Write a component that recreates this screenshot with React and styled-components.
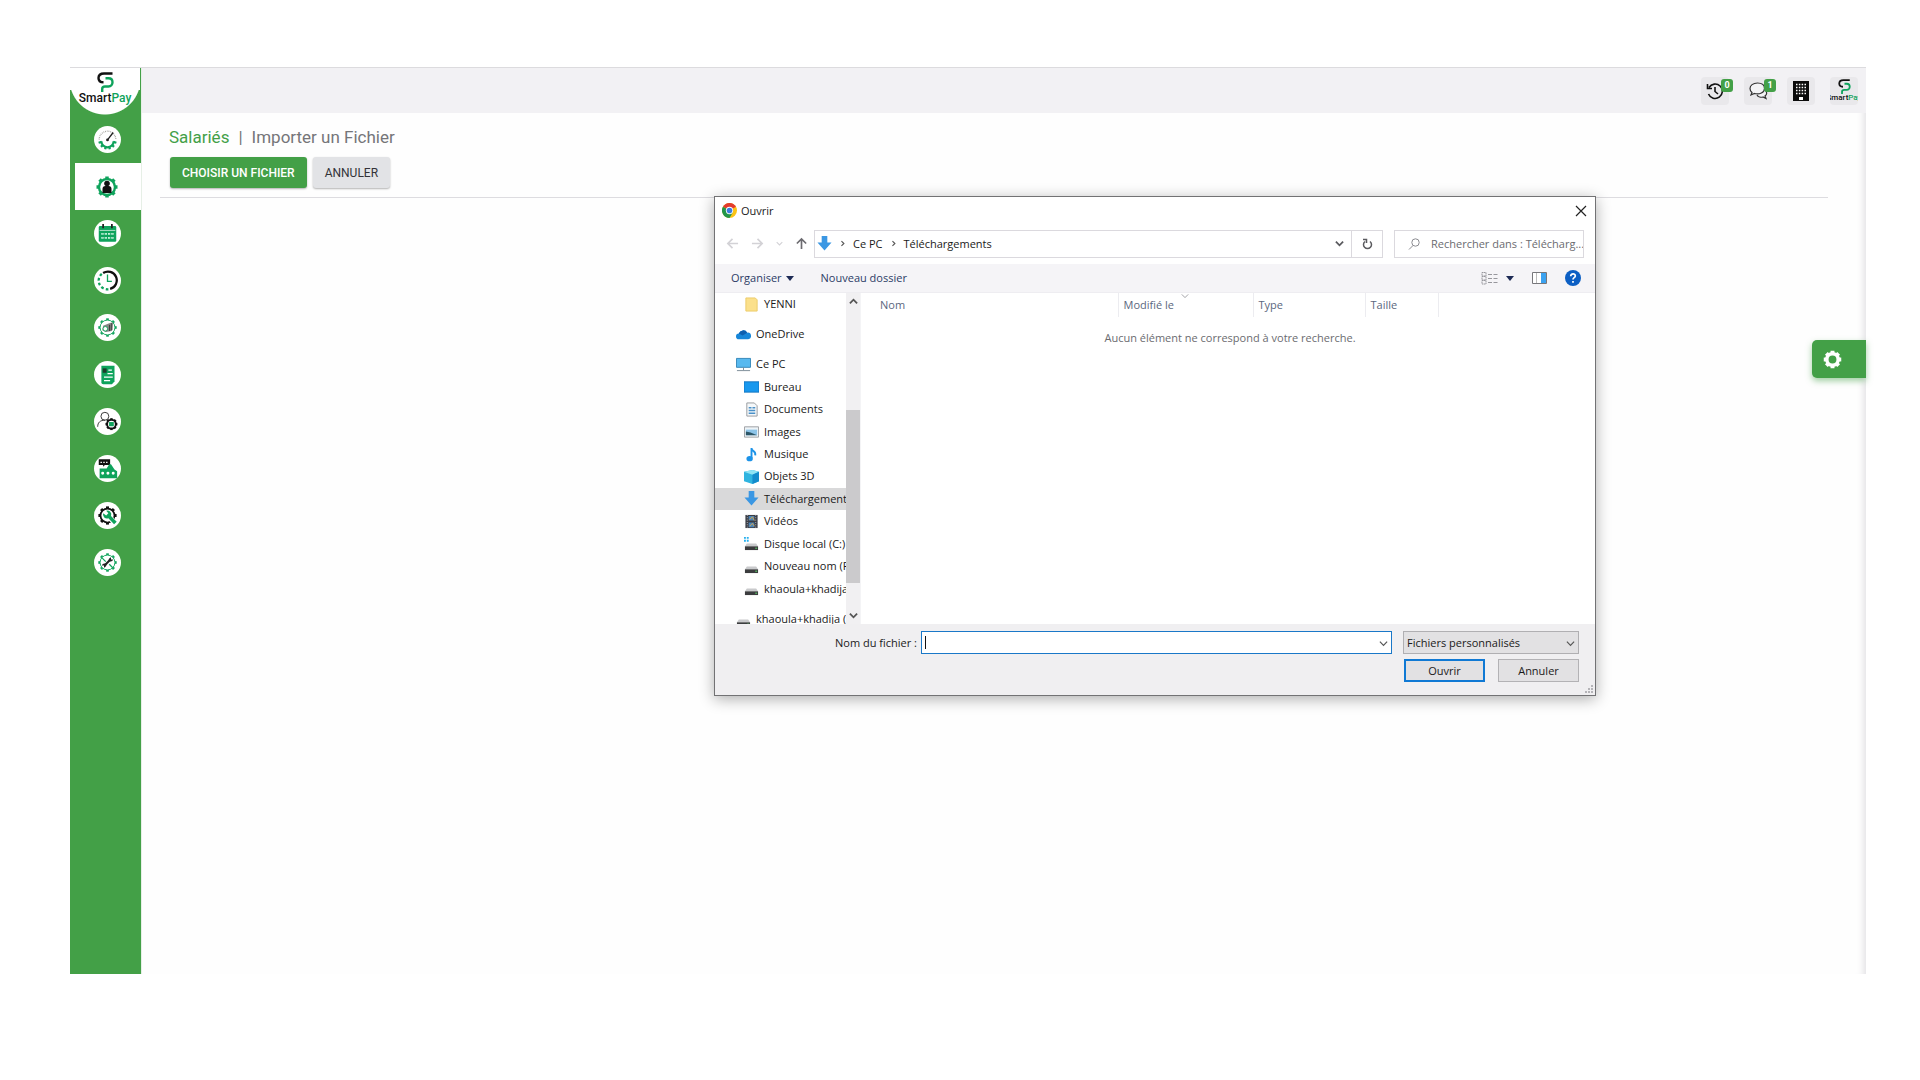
import React from "react";
import styled, { createGlobalStyle, css } from "styled-components";

const GREEN = "#43a047";
const MARK = "#0fa35c";
const UI = '"Open Sans", "Noto Sans", sans-serif';

const GlobalStyle = createGlobalStyle`
  *, *::before, *::after { box-sizing: border-box; }
  body { margin: 0; background: #fff; font-family: Roboto, sans-serif; }
  button, input, select { font: inherit; color: inherit; margin: 0; }
  svg { display: block; flex: none; }
`;

/* ---------- page shell ---------- */

const Page = styled.div`
  min-height: 100vh;
  padding: 67px 54px 106px 70px;
  display: flex;
`;

const Frame = styled.div`
  flex: 1;
  display: flex;
  position: relative;
  background: #fefefe;
  border-top: 1px solid #dcdbde;
`;

const Sidebar = styled.nav`
  flex: none;
  width: 71px;
  background: ${GREEN};
`;

const Brand = styled.a`
  display: flex;
  flex-direction: column;
  align-items: center;
  height: 48px;
  margin: 0 1px 0 0;
  background: radial-gradient(circle at 50% 11px, #fff 35px, ${GREEN} 36px);
  text-decoration: none;
`;

const BrandTop = styled.div`
  width: 100%;
  height: 22px;
  padding-top: 4px;
  display: flex;
  justify-content: center;
  background: #fff;
`;

const BrandName = styled.span`
  font-size: ${(p) => (p.$small ? 8 : 12)}px;
  line-height: ${(p) => (p.$small ? 8 : 16)}px;
  font-weight: 500;
  color: #111;
  white-space: nowrap;
  em { font-style: normal; color: ${MARK}; }
`;

const Menu = styled.ul`
  list-style: none;
  margin: 0;
  padding: 0;
`;

const MenuLink = styled.a`
  display: flex;
  align-items: center;
  justify-content: center;
  height: 47px;
  padding-right: 1px;
  border-left: 5px solid ${GREEN};
  background: ${(p) => (p.$active ? "#fff" : "transparent")};
`;

const Disc = styled.span`
  display: grid;
  place-items: center;
  width: 27px;
  height: 27px;
  margin-right: 1px;
  border-radius: 50%;
  background: #fff;
`;

const Main = styled.main`
  flex: 1;
  min-width: 0;
  border-left: 1px solid #e6efe6;
  box-shadow: inset -9px 0 8px -8px #d9d8dc;
`;

const TopBar = styled.header`
  display: flex;
  justify-content: flex-end;
  align-items: center;
  gap: 15px;
  height: 45px;
  padding-right: 8px;
  background: #f2f1f4;
`;

const TopButton = styled.button`
  position: relative;
  display: flex;
  flex-direction: column;
  align-items: center;
  justify-content: center;
  width: 28px;
  height: 28px;
  padding: 0;
  border: 0;
  border-radius: 4px;
  background: #e9e8eb;
  overflow: ${(p) => (p.$clip ? "hidden" : "visible")};
`;

const Badge = styled.span`
  position: absolute;
  top: 2px;
  right: -4px;
  width: 12px;
  height: 13px;
  border-radius: 3px;
  background: ${GREEN};
  color: #fff;
  font-size: 9px;
  font-weight: 700;
  line-height: 13px;
  text-align: center;
`;

const PageHead = styled.section`
  margin: 0 38px 0 18px;
  padding: 12px 0 9px 9px;
  border-bottom: 1px solid #dddce0;
`;

const Title = styled.h1`
  display: flex;
  gap: 9px;
  margin: 0 0 8px;
  font-size: 17px;
  line-height: 24px;
  font-weight: 400;
  color: #757579;
  a { color: ${GREEN}; text-decoration: none; }
`;

const Actions = styled.div`
  display: flex;
  gap: 6px;
  padding-left: 1px;
`;

const ActionButton = styled.button`
  height: 31px;
  padding: 0 12px;
  border: 0;
  border-radius: 3px;
  font-size: 12px;
  font-weight: ${(p) => (p.$primary ? 500 : 400)};
  color: ${(p) => (p.$primary ? "#fff" : "#333338")};
  background: ${(p) => (p.$primary ? GREEN : "#e2e3e6")};
  box-shadow: 0 1px 2px rgba(0, 0, 0, 0.3);
`;

const SettingsTab = styled.button`
  position: absolute;
  right: 0;
  top: 272px;
  display: flex;
  align-items: center;
  width: 54px;
  height: 38px;
  padding: 0 0 0 10px;
  border: 0;
  border-radius: 5px 0 0 5px;
  background: ${GREEN};
  box-shadow: 0 3px 6px rgba(67, 160, 71, 0.5);
`;

/* ---------- file dialog ---------- */

const Dialog = styled.section`
  position: absolute;
  left: 644px;
  top: 128px;
  width: 882px;
  border: 1px solid #727274;
  background: #fff;
  box-shadow: 0 3px 14px rgba(0, 0, 0, 0.32);
  font-family: ${UI};
  font-size: 11px;
  line-height: 16px;
  color: #1a1a1a;
`;

const TitleBar = styled.header`
  display: flex;
  align-items: center;
  gap: 4px;
  height: 27px;
  padding: 0 8px 0 7px;
  h2 { flex: 1; margin: 0; font: inherit; }
`;

const IconButton = styled.button`
  display: grid;
  place-items: center;
  padding: 0;
  border: 0;
  background: none;
`;

const NavRow = styled.div`
  display: flex;
  align-items: center;
  height: 40px;
  padding: 0 11px 1px;
`;

const NavButtons = styled.div`
  display: flex;
  align-items: center;
  gap: 12px;
  width: 88px;
`;

const Address = styled.div`
  flex: 1;
  display: flex;
  align-items: center;
  gap: 7px;
  height: 28px;
  padding-left: 2px;
  border: 1px solid #dbd9de;
  ${IconButton}:nth-last-child(2) { margin-left: auto; }
  ${IconButton}:last-child {
    width: 31px;
    height: 26px;
    border-left: 1px solid #dbd9de;
  }
`;

const Crumb = styled.a`
  color: inherit;
  text-decoration: none;
`;

const Search = styled.label`
  display: flex;
  align-items: center;
  gap: 11px;
  width: 190px;
  height: 28px;
  margin-left: 11px;
  padding: 0 0 0 13px;
  border: 1px solid #dbd9de;
  input {
    flex: 1;
    min-width: 0;
    padding: 0;
    border: 0;
    outline: 0;
    background: none;
  }
  input::placeholder { color: #6b6b70; opacity: 1; }
`;

const ToolBar = styled.div`
  display: flex;
  align-items: center;
  height: 29px;
  padding: 0 14px 0 16px;
  background: #f5f4f7;
  border-bottom: 1px solid #eeedf1;
  color: #2c3c66;
`;

const TextButton = styled.button`
  display: flex;
  align-items: center;
  gap: 4px;
  margin-right: 27px;
  padding: 0;
  border: 0;
  background: none;
`;

const ToolIcons = styled.div`
  display: flex;
  align-items: center;
  gap: 18px;
  margin-left: auto;
`;

const ViewButton = styled(IconButton)`
  display: flex;
  gap: 8px;
  align-items: center;
`;

const Body = styled.div`
  display: flex;
  height: 331px;
`;

const Tree = styled.div`
  flex: none;
  width: 131px;
  overflow: hidden;
  display: flex;
  flex-direction: column;
  gap: 8px;
`;

const TreeGroup = styled.ul`
  flex: none;
  display: grid;
  grid-auto-rows: 1fr;
  height: ${(p) => p.$height}px;
  margin: 0;
  padding: 0;
  list-style: none;
`;

const TreeItem = styled.li`
  display: flex;
  align-items: center;
  gap: 5px;
  padding-left: ${(p) => (p.$nested ? 29 : 21)}px;
  white-space: nowrap;
  background: ${(p) => (p.$selected ? "#d9d9da" : "transparent")};
`;

const ScrollBar = styled.div`
  flex: none;
  display: flex;
  flex-direction: column;
  align-items: center;
  width: 15px;
  padding: 4px 0;
  background: #f1f0f2;
  border-right: 1px solid #f4f4f6;
`;

const Thumb = styled.div`
  width: 100%;
  height: 173px;
  margin: auto 0 28px;
  background: #cbcacc;
`;

const Files = styled.div`
  flex: 1;
  position: relative;
`;

const Table = styled.table`
  width: 578px;
  table-layout: fixed;
  border-collapse: collapse;
  th {
    height: 24px;
    padding: 0 0 0 5px;
    border-right: 1px solid #ececf0;
    font-weight: 400;
    text-align: left;
    color: #5b6780;
  }
  th:first-child { padding-left: 19px; }
`;

const Empty = styled.p`
  margin: 13px 0 0;
  padding-left: 4px;
  text-align: center;
  color: #6b6b70;
`;

const SortMark = styled.span`
  position: absolute;
  left: 320px;
  top: -1px;
`;

const Footer = styled.form`
  display: grid;
  grid-template-columns: 200px 1fr 176px;
  column-gap: 11px;
  row-gap: 5px;
  padding: 7px 16px 13px 6px;
  background: #f0eff1;
`;

const NameField = styled.div`
  grid-column: 1 / 3;
  display: flex;
  align-items: center;
  gap: 4px;
  padding-left: 114px;
`;

const Combo = styled.div`
  position: relative;
  flex: 1;
  svg {
    position: absolute;
    right: 4px;
    top: 8px;
    pointer-events: none;
  }
`;

const control = css`
  width: 100%;
  height: 23px;
  border-radius: 0;
  outline: 0;
  appearance: none;
`;

const NameInput = styled.input`
  ${control}
  display: block;
  padding: 0 4px;
  border: 1px solid #1a78c8;
  background: #fff;
`;

const Caret = styled.span`
  position: absolute;
  left: 4px;
  top: 5px;
  width: 1px;
  height: 13px;
  background: #111;
`;

const TypeSelect = styled.select`
  ${control}
  display: block;
  padding: 0 3px;
  border: 1px solid #b0afb2;
  background: #e2e1e3;
`;

const FooterButtons = styled.div`
  grid-column: 3;
  display: flex;
  justify-content: space-between;
  padding-left: 1px;
`;

const DialogButton = styled.button`
  width: 81px;
  height: 23px;
  padding: 0;
  border: ${(p) => (p.$default ? "2px solid #1079d4" : "1px solid #b3b2b5")};
  background: #e2e1e3;
`;

const Grip = styled.span`
  position: absolute;
  right: 2px;
  bottom: 2px;
`;

/* ---------- drawings ---------- */

const Gear = ({ cx = 12, cy = 12, r = 7, color = MARK, w = 2, n = 8, tooth = 3 }) => (
  <g stroke={color} fill="none">
    <circle cx={cx} cy={cy} r={r} strokeWidth={w} />
    {Array.from({ length: n }, (_, i) => (
      <line
        key={i}
        x1={cx}
        x2={cx}
        y1={cy - r}
        y2={cy - r - tooth}
        strokeWidth={tooth + 1}
        transform={`rotate(${(i * 360) / n} ${cx} ${cy})`}
      />
    ))}
  </g>
);

const Icon = ({ size = 24, box = 24, children }) => (
  <svg width={size} height={size} viewBox={`0 0 ${box} ${box}`} aria-hidden="true">
    {children}
  </svg>
);

const Mark = ({ width = 17, height = 20 }) => (
  <svg width={width} height={height} viewBox="0 0 17 20" fill="none" strokeWidth="2.4" aria-hidden="true">
    <path d="M15.500 1.500H7C3.500 1.500 1.500 3.300 1.500 6S3.500 10.300 6.500 10.300" stroke="#111" />
    <path d="M8.500 6.300h3c2.500 0 4 1.700 4 4s-1.500 4.200-4 4.200H8c-1.800 0-2.800 1-2.800 2.500V20" stroke={MARK} />
  </svg>
);

const MENU = [
  ["Tableau de bord", (
    <>
      <path d="M2.500 12a9.500 9.500 0 0 1 19 0" fill="none" stroke="#a5a5a0" strokeWidth="1.500" strokeDasharray="1 1" />
      <path d="M5 14a7 7 0 0 0 14 0" fill="none" stroke={MARK} strokeWidth="2.500" />
      {[-75, -45, -15, 15, 45, 75].map((a) => (
        <path key={a} d="M12 20v3.500" stroke={MARK} strokeWidth="2.600" transform={`rotate(${a} 12 13)`} />
      ))}
      <path d="M12 12.500L18.500 4" stroke="#222" strokeWidth="1.500" />
      <circle cx="12" cy="12.500" r="1.600" fill="#222" />
    </>
  )],
  ["Salariés", (
    <>
      <Gear r={8} w={2.4} tooth={2.500} />
      <circle cx="12" cy="8.500" r="2.800" fill="#111" />
      <path d="M7.500 18v-4q0-3 3-3h3q3 0 3 3v4z" fill="#111" />
    </>
  )],
  ["Calendrier", (
    <>
      <rect x="2" y="3.500" width="20" height="18" rx="1.500" fill={MARK} />
      <path d="M7 1v5M17 1v5" stroke="#222" strokeWidth="2" />
      <path d="M3 8.500h18" stroke="#bfe6d0" />
      <path d="M5 12.500h14M5 17h14" stroke="#e8fff2" strokeWidth="2" strokeDasharray="2.500 1.300" />
      <path d="M5.800 12.500h13M5.800 17h13" stroke={MARK} strokeWidth=".8" strokeDasharray="1 2.800" />
    </>
  )],
  ["Pointage", (
    <g fill="none">
      <path d="M7 3.500A10 10 0 1 1 15 21.500" stroke="#111" strokeWidth="2.600" />
      <path d="M13 22A10 10 0 0 1 6 4" stroke={MARK} strokeWidth="2.600" strokeDasharray="3 2.500" />
      <path d="M12 5v8h5" stroke={MARK} strokeWidth="1.500" />
    </g>
  )],
  ["Paie", (
    <>
      <Gear r={8.5} w={1.1} tooth={2} />
      <path d="M7 10l7-3 4-1-1 10-7 1-4-2z" fill="#858585" />
      <path d="M14.500 9v7M17 7v8" stroke="#222" />
      <circle cx="9.500" cy="13.500" r="2.600" fill="#fff" stroke={MARK} />
    </>
  )],
  ["Documents", (
    <>
      <path d="M5 2h15v18l-3 3H7q-2 0-2-2z" fill={MARK} />
      <path d="M6.500 5H11v5H6.500z" fill="#1d3b2c" />
      <path d="M13 7h4M12 11h6M8 15h10M8 19h7" stroke="#fff" strokeWidth="1.600" />
    </>
  )],
  ["Gestion du personnel", (
    <>
      <circle cx="9" cy="6" r="4.500" fill="none" stroke="#222" />
      <path d="M.8 18c0-5 3-7.500 8.200-7.500" fill="none" stroke="#222" />
      <Gear cx={16.5} cy={15} r={5} w={2.2} tooth={1.8} color="#111" />
      <rect x="13.800" y="12.600" width="5.400" height="4.800" fill={MARK} />
    </>
  )],
  ["Messagerie", (
    <>
      <path d="M2 1.500h13v6.500H9l-2 2V8H2z" fill="#111" />
      <path d="M4 5h9" stroke="#fff" strokeWidth="1.600" strokeDasharray="1.600 1.600" />
      <path d="M3 12h8l3-5h2l4 6 3 2v8H3z" fill={MARK} />
      <path d="M6.500 17.500h.01M12.500 17.500h.01M18.500 17.500h.01" stroke="#fff" strokeWidth="3.400" strokeLinecap="round" />
    </>
  )],
  ["Maintenance", (
    <>
      <Gear r={8} w={2} tooth={2.400} color="#111" />
      <path d="M12.500 12.500l8 8" stroke="#fff" strokeWidth="6" />
      <path d="M7 9.500a4.500 4.500 0 0 0 6 5.500l6.500 7 3-3-6.500-6.500A4.500 4.500 0 0 0 10.500 6.500l2.500 3-2.500 2.500z" fill={MARK} />
    </>
  )],
  ["Paramétrage", (
    <>
      <Gear r={8.5} w={1.1} tooth={2} />
      <path d="M6 7l4 4M14 14l4 4" stroke={MARK} strokeWidth="1.500" />
      <path d="M9.500 14.500l5-5" stroke="#222" strokeWidth="2.400" />
      <path d="M13.500 10.500q-1-3 2.500-4.500v2.500h2.500q-1 3.500-5 2zM10.500 13.500q1 3-2.500 4.500v-2.500H5.500q1-3.500 5-2z" fill="#222" />
    </>
  )],
];

const Chevron = ({ dir = "down", size = 9, color = "#555", w = 1.6 }) => (
  <svg width={size} height={size} viewBox="0 0 10 10" fill="none" stroke={color} strokeWidth={w} aria-hidden="true">
    <path d={{ down: "M1 3l4 4 4-4", up: "M1 7l4-4 4 4", right: "M3.500 1.500L7 5 3.500 8.500" }[dir]} />
  </svg>
);

const Arrow = ({ turn = 0, color }) => (
  <svg width="13" height="13" viewBox="0 0 14 14" fill="none" stroke={color} strokeWidth="1.800" aria-hidden="true">
    <path d="M13 7H2M7 2L2 7l5 5" transform={`rotate(${turn} 7 7)`} />
  </svg>
);

const Caption = ({ color = "#1d2a55" }) => (
  <svg width="8" height="5" viewBox="0 0 8 5" aria-hidden="true"><path d="M0 0h8L4 5z" fill={color} /></svg>
);

const DownArrow = () => <path d="M5 0h6v7h4.500L8 15.500.5 7H5z" fill="#3b97e3" />;

const Drive = () => (
  <>
    <path d="M3 7h10l2 3H1z" fill="#c9cacc" />
    <path d="M1 10h14v4H1z" fill="#3b3c3e" />
    <path d="M12 12h2" stroke="#5fe06b" />
  </>
);

const TREE_ICONS = {
  folder: <path d="M2 1h10l2 2v12H2z" fill="#fbe08b" stroke="#eccb68" />,
  cloud: (
    <>
      <path d="M3 13a3 3 0 0 1 0-6 5 5 0 0 1 9-1 3.500 3.500 0 0 1 1 7z" fill="#1686d9" />
      <path d="M3 7a5 5 0 0 1 9-1l-5 3z" fill="#0c5fb0" />
    </>
  ),
  pc: (
    <>
      <path d="M.5 1.500h15v9.500H.5z" fill="#58b9ef" stroke="#3486b8" />
      <path d="M8 11v3M1 14.500h14" stroke="#7a8b96" />
    </>
  ),
  desktop: <path d="M0 3h16v11H0z" fill="#1898ee" stroke="#1274bf" />,
  document: (
    <>
      <path d="M3 1h8l3 3v11H3z" fill="#f5f8fa" stroke="#95999d" />
      <path d="M5 6h3M9 6h3M5 9h7M5 12h7" stroke="#4a90c8" strokeWidth="1.600" />
    </>
  ),
  image: (
    <>
      <path d="M.5 3h15v11H.5z" fill="#eef4f8" stroke="#9b9ea1" />
      <path d="M2 6h12v6H2z" fill="#8cc4e8" />
      <path d="M2 12V8l5 1 7 3z" fill="#2c5668" />
    </>
  ),
  music: (
    <>
      <path d="M8 12V1c0 4 5 3 4 8" fill="none" stroke="#1c93e8" strokeWidth="2" />
      <ellipse cx="6" cy="12.500" rx="3.400" ry="2.800" fill="#1c93e8" />
    </>
  ),
  cube: (
    <>
      <path d="M0 3l9-2 7 2v10l-7 3-9-3z" fill="#2fb4e0" />
      <path d="M0 3l9-2 7 2-7 3z" fill="#8fe4f4" />
      <path d="M9 6l7-3v10l-7 3z" fill="#148ccc" />
    </>
  ),
  download: <DownArrow />,
  video: (
    <>
      <path d="M1.500 1h13v14h-13z" fill="#3a3d46" />
      <path d="M5 2h6v5H5zM5 9h6v5H5z" fill="#4b83b8" />
      <path d="M6 6l3-3 2 4M6 13l3-3 2 3" stroke="#d9a648" fill="none" />
      <path d="M3.500 1v14M12.500 1v14" stroke="#bbb" strokeDasharray="1 1.500" />
    </>
  ),
  system: (
    <>
      <g transform="translate(0 1)"><Drive /></g>
      <path d="M0 1h2v2H0zM3 1h2v2H3zM0 4h2v2H0zM3 4h2v2H3z" fill="#27b0ee" />
    </>
  ),
  drive: <g transform="translate(0 1)"><Drive /></g>,
};

const PC_ITEMS = [
  ["pc", "Ce PC"],
  ["desktop", "Bureau"],
  ["document", "Documents"],
  ["image", "Images"],
  ["music", "Musique"],
  ["cube", "Objets 3D"],
  ["download", "Téléchargements"],
  ["video", "Vidéos"],
  ["system", "Disque local (C:)"],
  ["drive", "Nouveau nom (F:)"],
  ["drive", "khaoula+khadija"],
];

const TreeRow = ({ icon, label, nested, selected }) => (
  <TreeItem $nested={nested} $selected={selected}>
    <Icon size={15} box={16}>{TREE_ICONS[icon]}</Icon>
    {label}
  </TreeItem>
);

const Chrome = () => (
  <Icon size={15} box={16}>
    <circle cx="8" cy="8" r="8" fill="#fbc316" />
    <path d="M8 8L1.070 4A8 8 0 0 1 14.930 4z" fill="#e33b2e" />
    <path d="M8 8L1.070 4A8 8 0 0 0 8 16l3.500-6z" fill="#23964a" />
    <circle cx="8" cy="8" r="3.900" fill="#fff" />
    <circle cx="8" cy="8" r="3" fill="#3b7de0" />
  </Icon>
);

function FileDialog() {
  return (
    <Dialog role="dialog" aria-labelledby="dialog-title">
      <TitleBar>
        <Chrome />
        <h2 id="dialog-title">Ouvrir</h2>
        <IconButton aria-label="Fermer">
          <svg width="12" height="12" viewBox="0 0 12 12" stroke="#222" strokeWidth="1.200">
            <path d="M1 1l10 10M11 1L1 11" />
          </svg>
        </IconButton>
      </TitleBar>

      <NavRow>
        <NavButtons>
          <IconButton aria-label="Précédent"><Arrow color="#d3d2d6" /></IconButton>
          <IconButton aria-label="Suivant"><Arrow turn={180} color="#d3d2d6" /></IconButton>
          <IconButton aria-label="Récents"><Chevron size={7} color="#d3d2d6" /></IconButton>
          <IconButton aria-label="Dossier parent"><Arrow turn={90} color="#6c6b70" /></IconButton>
        </NavButtons>
        <Address>
          <Icon size={15} box={16}><DownArrow /></Icon>
          <Chevron dir="right" size={7} />
          <Crumb href="#pc">Ce PC</Crumb>
          <Chevron dir="right" size={7} />
          <Crumb href="#telechargements">Téléchargements</Crumb>
          <IconButton aria-label="Historique"><Chevron color="#5a5a5e" w={2} /></IconButton>
          <IconButton aria-label="Actualiser">
            <svg width="11" height="12" viewBox="0 0 11 12" fill="none" stroke="#5a5a5e" strokeWidth="1.500">
              <path d="M3 3.500A4 4 0 1 0 8 3.500M1 1.500h3.500V5" />
            </svg>
          </IconButton>
        </Address>
        <Search>
          <svg width="12" height="12" viewBox="0 0 12 12" fill="none" stroke="#8b8b90">
            <circle cx="7.500" cy="4.500" r="3.700" />
            <path d="M5 7.500L1 11.500" />
          </svg>
          <input type="text" aria-label="Rechercher" placeholder="Rechercher dans : Télécharg..." />
        </Search>
      </NavRow>

      <ToolBar>
        <TextButton>Organiser <Caption /></TextButton>
        <TextButton>Nouveau dossier</TextButton>
        <ToolIcons>
          <ViewButton aria-label="Affichage">
            <svg width="17" height="13" viewBox="0 0 17 13" fill="none" stroke="#97979c">
              <path d="M1 .5h4v3.500H1zM1 4.500h4v3.500H1zM1 8.500h4v3.500H1z" strokeDasharray="1.500 .5" />
              <path d="M7 2.500h4M12.500 2.500h4M7 6.500h4M12.500 6.500h4M7 10.500h4M12.500 10.500h4" />
            </svg>
            <Caption />
          </ViewButton>
          <IconButton aria-label="Volet de visualisation">
            <svg width="15" height="12" viewBox="0 0 15 12">
              <path d="M.5 .5h14v11H.5z" fill="#fff" stroke="#77777b" />
              <path d="M9 1h5v10H9z" fill="#3ba2f0" />
              <path d="M4.500 1v10" stroke="#bbb" />
            </svg>
          </IconButton>
          <IconButton aria-label="Aide">
            <svg width="16" height="16" viewBox="0 0 16 16">
              <circle cx="8" cy="8" r="8" fill="#0c5fc4" />
              <path d="M5.700 6.200C5.700 3 10.500 3.200 10.300 6 10.200 7.700 8 7.600 8 9.500M8 11v1.800" fill="none" stroke="#fff" strokeWidth="1.700" />
            </svg>
          </IconButton>
        </ToolIcons>
      </ToolBar>

      <Body>
        <Tree>
          <TreeGroup $height={22}><TreeRow icon="folder" label="YENNI" nested /></TreeGroup>
          <TreeGroup $height={22}><TreeRow icon="cloud" label="OneDrive" /></TreeGroup>
          <TreeGroup $height={247}>
            {PC_ITEMS.map(([icon, label], i) => (
              <TreeRow key={label} icon={icon} label={label} nested={i > 0} selected={icon === "download"} />
            ))}
          </TreeGroup>
          <TreeGroup $height={22}><TreeRow icon="drive" label="khaoula+khadija (F:)" /></TreeGroup>
        </Tree>
        <ScrollBar>
          <Chevron dir="up" w={2} />
          <Thumb />
          <Chevron w={2} />
        </ScrollBar>
        <Files>
          <SortMark><Chevron size={8} color="#8b8b90" w={1} /></SortMark>
          <Table>
            <colgroup>
              <col style={{ width: 257 }} />
              <col style={{ width: 135 }} />
              <col style={{ width: 112 }} />
              <col />
            </colgroup>
            <thead>
              <tr><th>Nom</th><th>Modifié le</th><th>Type</th><th>Taille</th></tr>
            </thead>
          </Table>
          <Empty>Aucun élément ne correspond à votre recherche.</Empty>
        </Files>
      </Body>

      <Footer onSubmit={(e) => e.preventDefault()}>
        <NameField>
          <label htmlFor="file-name">Nom du fichier :</label>
          <Combo>
            <NameInput id="file-name" type="text" />
            <Caret />
            <Chevron size={9} w={1.3} />
          </Combo>
        </NameField>
        <Combo>
          <TypeSelect aria-label="Type de fichier">
            <option>Fichiers personnalisés</option>
          </TypeSelect>
          <Chevron size={9} w={1.3} />
        </Combo>
        <FooterButtons>
          <DialogButton type="submit" $default>Ouvrir</DialogButton>
          <DialogButton type="button">Annuler</DialogButton>
        </FooterButtons>
      </Footer>
      <Grip>
        <svg width="8" height="8" viewBox="0 0 8 8" fill="#b5b4b8">
          <path d="M6 0h2v2H6zM3 3h2v2H3zM6 3h2v2H6zM0 6h2v2H0zM3 6h2v2H3zM6 6h2v2H6z" />
        </svg>
      </Grip>
    </Dialog>
  );
}

export default function App() {
  return (
    <>
      <GlobalStyle />
      <Page>
        <Frame>
          <Sidebar aria-label="Menu principal">
            <Brand href="#accueil">
              <BrandTop><Mark /></BrandTop>
              <BrandName>Smart<em>Pay</em></BrandName>
            </Brand>
            <Menu>
              {MENU.map(([label, art], i) => (
                <li key={label}>
                  <MenuLink href={`#menu-${i}`} aria-label={label} $active={i === 1}>
                    <Disc><Icon size={i === 1 ? 24 : 21}>{art}</Icon></Disc>
                  </MenuLink>
                </li>
              ))}
            </Menu>
          </Sidebar>

          <Main>
            <TopBar>
              <TopButton aria-label="Historique">
                <svg width="18" height="18" viewBox="0 0 18 18" fill="none" stroke="#111" strokeWidth="1.600">
                  <path d="M3 5.500A7.200 7.200 0 1 1 2.500 12M1.500 2v4.500H6M9 5v4.500l3 2.500" />
                </svg>
                <Badge>0</Badge>
              </TopButton>
              <TopButton aria-label="Messages">
                <svg width="19" height="18" viewBox="0 0 19 18" fill="#f4f4f6" stroke="#333" strokeWidth="1.200">
                  <path d="M8 13c1 2 4 2.500 6 2l3 1.500-1-2.500c2-1.500 2.500-4 0-6" />
                  <path d="M8.500 1C4 1 1 3.500 1 6.500c0 2 1 3.200 2 4L2 13l3.500-1.500c5 1.500 10-1 10-5S12 1 8.500 1z" />
                </svg>
                <Badge>1</Badge>
              </TopButton>
              <TopButton aria-label="Société">
                <svg width="16" height="20" viewBox="0 0 16 20">
                  <path d="M0 0h16v20H0z" fill="#0b0b0b" />
                  <path d="M3 3.500h10M3 6.500h10M3 9.500h10M3 12.500h10" stroke="#fff" strokeWidth="1.500" strokeDasharray="1.500 1.330" />
                  <path d="M6 16h4v3H6z" fill="#fff" />
                </svg>
              </TopButton>
              <TopButton aria-label="Compte" $clip>
                <Mark width={13} height={15} />
                <BrandName $small>Smart<em>Pay</em></BrandName>
              </TopButton>
            </TopBar>

            <PageHead>
              <Title>
                <a href="#salaries">Salariés</a>
                <span>|</span>
                <span>Importer un Fichier</span>
              </Title>
              <Actions>
                <ActionButton $primary>CHOISIR UN FICHIER</ActionButton>
                <ActionButton>ANNULER</ActionButton>
              </Actions>
            </PageHead>
          </Main>

          <SettingsTab aria-label="Paramètres">
            <Icon size={21}>
              <Gear r={6.5} w={4} tooth={3.5} color="#fff" />
            </Icon>
          </SettingsTab>

          <FileDialog />
        </Frame>
      </Page>
    </>
  );
}
